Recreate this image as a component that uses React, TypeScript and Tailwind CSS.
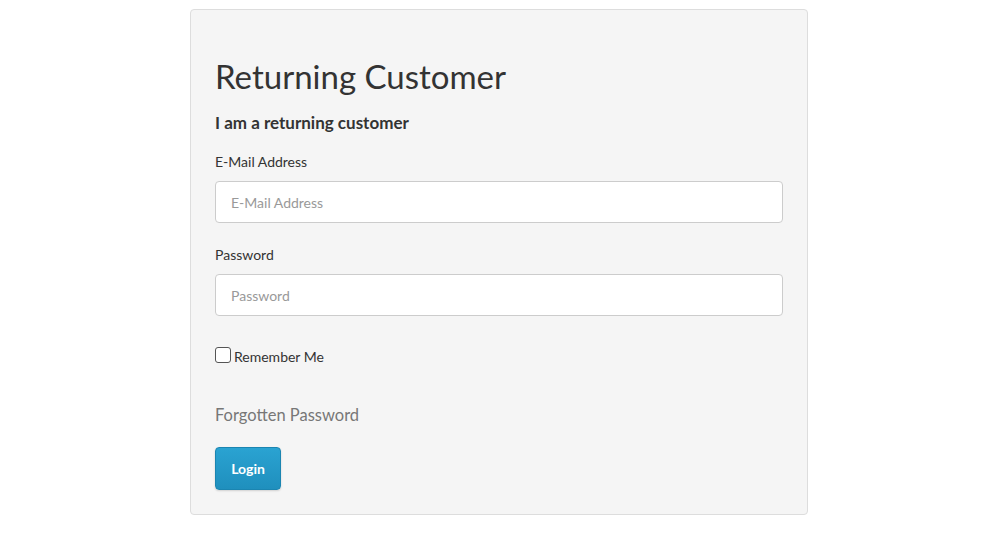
export default function App() {
  return (
    <div className="w-full min-h-[535px] bg-white font-['Lato',sans-serif] text-[#333]">
      <div className="w-[618px] ml-[190px] mt-[9px] bg-[#f5f5f5] border border-[#dddddd] rounded-[4px] px-6 pt-[46px] pb-6">
        <h2 className="text-[33px] leading-[40px] text-[#333] mb-[16px]">Returning Customer</h2>
        <p className="text-[17px] font-bold leading-[22px] mb-[18px]">I am a returning customer</p>

        <div>
          <label className="block text-[14px] leading-[20px] mb-[9px]">E-Mail Address</label>
          <input
            type="text"
            placeholder="E-Mail Address"
            className="w-full h-[42px] px-[15px] bg-white border border-[#cccccc] rounded-[4px] text-[14px] placeholder:text-[#999] outline-none"
          />
        </div>

        <div className="mb-[27px]">
          <label className="block text-[14px] leading-[20px] mb-[9px] mt-[22px]">Password</label>
          <input
            type="password"
            placeholder="Password"
            className="w-full h-[42px] px-[15px] bg-white border border-[#cccccc] rounded-[4px] text-[14px] placeholder:text-[#999] outline-none"
          />
        </div>

        <label className="flex items-center gap-[3px] text-[14px] leading-[20px] mb-[37px]">
          <span className="w-[16px] h-[16px] border border-[#555] rounded-[3px] bg-white"></span>
          <span className="mt-[4px]">Remember Me</span>
        </label>

        <a className="block text-[16.5px] leading-[22px] text-[#777] mb-[21px]">Forgotten Password</a>

        <button className="w-[66px] h-[43px] rounded-[4px] bg-gradient-to-b from-[#2aa3d2] to-[#1f8fbd] border border-[#1b85b1] text-white text-[14px] font-bold shadow-[0_1px_2px_rgba(0,0,0,0.15)]">
          Login
        </button>
      </div>
    </div>
  );
}
